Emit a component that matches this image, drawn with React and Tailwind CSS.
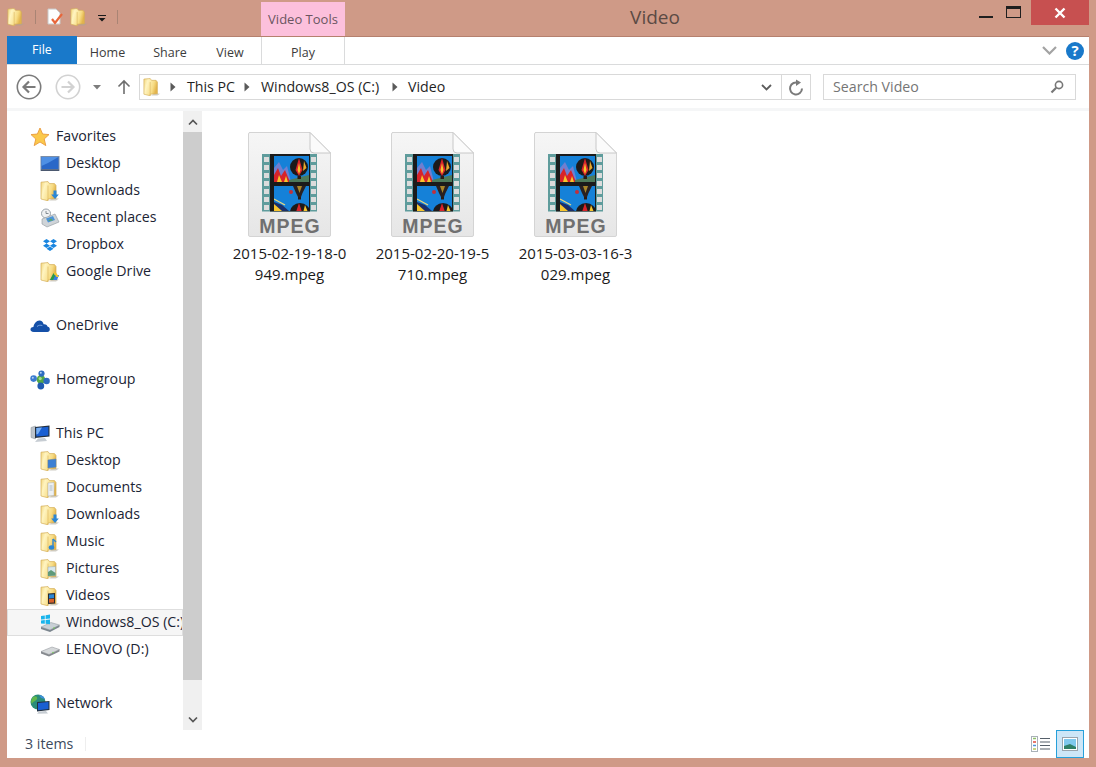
import { useId } from 'react'

function Folder({ children, size = 20 }) {
  const id = useId()
  return (
    <svg width={size} height={size} viewBox="0 0 20 20" className="shrink-0">
      <defs>
        <linearGradient id={id} x1="0" y1="0" x2="1" y2="0.35">
          <stop offset="0" stopColor="#f2d67e" />
          <stop offset="0.3" stopColor="#fff4c0" />
          <stop offset="0.75" stopColor="#f7dc85" />
          <stop offset="1" stopColor="#e3b54d" />
        </linearGradient>
      </defs>
      <path d="M13 17 L19 17.5 L16 19.5 L9 19.5 Z" fill="#a9a498" opacity="0.55" />
      <path d="M1 1.2 L8 0.6 L9.5 2.6 L14.5 2.6 L16 4.5 L16 17.5 L8 18 L8 19.8 L1 18 Z" fill={`url(#${id})`} stroke="#d3ac55" strokeWidth="0.7" />
      <path d="M8 4.5 V19.5" stroke="#dcb860" strokeWidth="0.7" />
      {children}
    </svg>
  )
}

function Star() {
  return (
    <svg width="20" height="20" viewBox="0 0 20 20" className="shrink-0">
      <path d="M10 1 L12.6 7 L19 7.6 L14.2 12 L15.8 18.6 L10 15 L4.2 18.6 L5.8 12 L1 7.6 L7.4 7 Z" fill="#fbc94b" stroke="#e99a3d" strokeWidth="0.9" />
    </svg>
  )
}

function DesktopIcon() {
  return (
    <svg width="20" height="20" viewBox="0 0 20 20" className="shrink-0">
      <rect x="0.5" y="2" width="19" height="15" fill="#7d8ea6" />
      <rect x="1.5" y="3" width="17" height="12" fill="#2a68c8" />
      <path d="M1.5 3 H18.5 L8 9 L1.5 12 Z" fill="#4f90e4" />
      <rect x="1" y="15.5" width="18" height="1.4" fill="#46536a" />
    </svg>
  )
}

function RecentIcon() {
  return (
    <svg width="20" height="20" viewBox="0 0 20 20" className="shrink-0">
      <circle cx="6" cy="5.5" r="4.5" fill="#eef0f2" stroke="#9aa3ab" />
      <path d="M6 3 V5.5 H8.5" stroke="#6a747c" fill="none" strokeWidth="0.8" />
      <path d="M2 11 L15 6 L19 14 L7 19 L2 16 Z" fill="#cfd4d8" stroke="#8f979e" strokeWidth="0.6" />
      <path d="M6 10.5 L13 8 L15 12 L8 14.5 Z" fill="#4d94d8" />
      <path d="M8 13 L11 10.5 L13 12.5 Z" fill="#63a65b" />
    </svg>
  )
}

function DropboxIcon() {
  return (
    <svg width="20" height="20" viewBox="0 0 20 20" className="shrink-0">
      <path d="M6.5 4 L10 6.2 L6.5 8.5 L3 6.2 Z M13.5 4 L17 6.2 L13.5 8.5 L10 6.2 Z M6.5 8.5 L10 10.8 L6.5 13 L3 10.8 Z M13.5 8.5 L17 10.8 L13.5 13 L10 10.8 Z M6.5 13.8 L10 11.6 L13.5 13.8 L10 16 Z" fill="#1a86e0" />
    </svg>
  )
}

function CloudIcon() {
  return (
    <svg width="20" height="20" viewBox="0 0 20 20" className="shrink-0">
      <path d="M3.8 16 C1.4 16 0.2 14.6 0.5 13 C0.8 11.6 2 10.8 3.4 10.9 C4 7.8 6.4 4.6 9.4 4.6 C11.6 4.6 13.2 6.2 13.6 8.2 C15.8 7.8 17.4 9.2 17.7 10.8 C19.2 11 20 12.4 19.8 13.8 C19.6 15.2 18.6 16 17.4 16 Z" fill="#1550a8" />
      <path d="M7 10.5 C8.6 9.2 10.4 8.9 12.4 9.6" stroke="#8fb6e8" strokeWidth="0.8" fill="none" />
    </svg>
  )
}

function HomegroupIcon() {
  return (
    <svg width="20" height="20" viewBox="0 0 20 20" className="shrink-0">
      <circle cx="11" cy="9.5" r="4.4" fill="#53a845" />
      <circle cx="11.5" cy="3.6" r="3.1" fill="#2d6cc0" />
      <circle cx="3.6" cy="8.6" r="3.3" fill="#3a7bd0" />
      <circle cx="16.6" cy="11" r="3.2" fill="#2d6cc0" />
      <circle cx="10.8" cy="16" r="3.4" fill="#1f5bb0" />
      <circle cx="10.2" cy="8.6" r="1.6" fill="#a9dd8d" />
      <circle cx="2.8" cy="7.8" r="1" fill="#b5d2f2" />
      <circle cx="10.8" cy="2.8" r="1" fill="#b5d2f2" />
    </svg>
  )
}

function PcIcon() {
  return (
    <svg width="20" height="20" viewBox="0 0 20 20" className="shrink-0">
      <path d="M1 3.5 L5.5 2 V15 L1 13.5 Z" fill="#bcc3ca" stroke="#8b939b" strokeWidth="0.5" />
      <path d="M5 3 L19.5 1.5 V12.5 L5 14 Z" fill="#23303f" />
      <path d="M6.3 4 L18.4 2.8 V11.4 L6.3 12.6 Z" fill="#1a5fd2" />
      <path d="M6.3 4 L12 3.4 L8 10 L6.3 10.6 Z" fill="#76aef2" />
      <path d="M8 14.5 L15 14 L17 17 L5 18 Z" fill="#c7cdd3" />
    </svg>
  )
}

function WindowsDrive() {
  return (
    <svg width="20" height="20" viewBox="0 0 20 20" className="shrink-0">
      <path d="M1 14 L11 9.5 L19.5 12 L10 17 Z" fill="#c9d0d6" stroke="#8a939b" strokeWidth="0.5" />
      <path d="M1 14 L10 17 L19.5 12 V14 L10 19 L1 16 Z" fill="#7c868f" />
      <circle cx="14" cy="15" r="0.8" fill="#6fd24c" />
      <path d="M1 3 L4.8 2.4 V6.2 L1 6.6 Z M5.6 2.3 L10 1.6 V5.6 L5.6 6.1 Z M1 7.4 L4.8 7 V10.8 L1 10.4 Z M5.6 6.9 L10 6.4 V11.2 L5.6 10.8 Z" fill="#19b4ec" />
    </svg>
  )
}

function GrayDrive() {
  return (
    <svg width="20" height="20" viewBox="0 0 20 20" className="shrink-0">
      <path d="M1 11.5 L12 7 L19.5 9.5 L9 14.5 Z" fill="#d5d8da" stroke="#8a8f94" strokeWidth="0.5" />
      <path d="M1 11.5 L9 14.5 L19.5 9.5 V11.5 L9 16.5 L1 13.5 Z" fill="#85898e" />
      <circle cx="13" cy="12.5" r="0.7" fill="#6fd24c" />
    </svg>
  )
}

function NetworkIcon() {
  return (
    <svg width="20" height="20" viewBox="0 0 20 20" className="shrink-0">
      <circle cx="8" cy="8" r="7.5" fill="#2a8c7a" />
      <path d="M3 3 C6 1 8 3 7 5 C6 7 3 7 2 10 C0.5 8 1 5 3 3 Z" fill="#62b84c" />
      <path d="M9 1 C12 1 14 3 15 5 L11 4 Z" fill="#3f8fd8" />
      <path d="M7 8 L19.5 7 V16 L7 17.5 Z" fill="#23303f" />
      <path d="M8 9 L18.5 8 V15 L8 16.2 Z" fill="#1a5fd2" />
      <path d="M9 17.5 L16 17 L18 19.5 L7 19.8 Z" fill="#c7cdd3" />
    </svg>
  )
}

const down = <path d="M13.5 9.5 H16.5 V13.5 H18.8 L15 18 L11.2 13.5 H13.5 Z" fill="#2a86d6" />

const favorites = [
  { label: 'Desktop', icon: <DesktopIcon /> },
  { label: 'Downloads', icon: <Folder>{down}</Folder> },
  { label: 'Recent places', icon: <RecentIcon /> },
  { label: 'Dropbox', icon: <DropboxIcon /> },
  {
    label: 'Google Drive',
    icon: (
      <Folder>
        <path d="M10 18 L13 13 H19 L17 18 Z" fill="#3b7de0" />
        <path d="M10 18 L13.5 11 L15 14 L13 18 Z" fill="#2a9a48" />
        <path d="M13.5 10.5 H16 L19 15 H16.5 Z" fill="#f3c52f" />
      </Folder>
    ),
  },
]

const pcItems = [
  { label: 'Desktop', icon: <Folder><path d="M8 9 L16 8 V16 L8 17 Z" fill="#3b7fd4" stroke="#5d7fa8" strokeWidth="0.6" /></Folder> },
  { label: 'Documents', icon: <Folder><path d="M8 5 L14 4.5 V17.5 L8 18 Z" fill="#eef1f3" stroke="#aab2b8" strokeWidth="0.5" /><path d="M9.5 8 H12.5 M9.5 10 H12.5 M9.5 12 H12.5" stroke="#8fa3b5" strokeWidth="0.7" /></Folder> },
  { label: 'Downloads', icon: <Folder>{down}</Folder> },
  { label: 'Music', icon: <Folder><path d="M13 7 V15" stroke="#2a86d6" strokeWidth="1.4" /><ellipse cx="11.5" cy="15.5" rx="2.8" ry="2.2" fill="#2a86d6" /><path d="M13 7 L16 10" stroke="#2a86d6" strokeWidth="1.2" /></Folder> },
  { label: 'Pictures', icon: <Folder><path d="M8 8 L15.5 7.5 V16.5 L8 17 Z" fill="#d5e6ee" stroke="#9aa8b0" strokeWidth="0.5" /><path d="M8 13 L11 11 L15.5 14 V16.5 L8 17 Z" fill="#5f9a7a" /></Folder> },
  { label: 'Videos', icon: <Folder><path d="M8 7.5 L15 7 V17.5 L8 18 Z" fill="#2c2c30" /><path d="M9 8.5 L14 8.2 V12 L9 12.4 Z" fill="#2a86d6" /><path d="M9 13 L14 12.7 V16.5 L9 16.8 Z" fill="#d8602a" /></Folder> },
  { label: 'Windows8_OS (C:)', icon: <WindowsDrive />, selected: true },
  { label: 'LENOVO (D:)', icon: <GrayDrive /> },
]

function NavRow({ label, icon, child, selected }) {
  return (
    <div
      className={`flex h-[27px] items-center gap-[6px] overflow-hidden whitespace-nowrap border ${
        selected ? 'bg-[#f6f6f6] border-[#dedede]' : 'border-transparent'
      } ${child ? 'pl-[32px]' : 'pl-[22px]'}`}
    >
      {icon}
      <span>{label}</span>
    </div>
  )
}

function Chevron({ up }) {
  return (
    <svg width="12" height="8" viewBox="0 0 12 8">
      <path d={up ? 'M2 6.5 L6 2.5 L10 6.5' : 'M2 1.5 L6 5.5 L10 1.5'} stroke="#555" strokeWidth="1.7" fill="none" />
    </svg>
  )
}

function Crumb() {
  return (
    <svg width="6" height="10" viewBox="0 0 6 10" className="shrink-0">
      <path d="M0.5 0.5 L5.5 5 L0.5 9.5 Z" fill="#5a5a5a" />
    </svg>
  )
}

function NavCircle({ dim }) {
  const c = dim ? '#d2d2d2' : '#7b7b7b'
  return (
    <svg width="26" height="26" viewBox="0 0 26 26" className="shrink-0">
      <circle cx="13" cy="13" r="11.7" fill="none" stroke={c} strokeWidth="1.6" />
      {dim ? (
        <path d="M6.5 13 H18 M13 7.5 L18.5 13 L13 18.5" stroke={c} strokeWidth="2.2" fill="none" />
      ) : (
        <path d="M19.5 13 H8 M13 7.5 L7.5 13 L13 18.5" stroke={c} strokeWidth="2.2" fill="none" />
      )}
    </svg>
  )
}

function MpegIcon() {
  const id = useId()
  const holes = [157, 165, 173, 181, 189, 197, 205]
  return (
    <svg width="84" height="108" viewBox="248 130 84 108">
      <defs>
        <clipPath id={id + 'a'}><rect x="274" y="156" width="35" height="26" /></clipPath>
        <clipPath id={id + 'b'}><rect x="274" y="186" width="35" height="25" /></clipPath>
        <linearGradient id={id + 'p'} x1="0" y1="0" x2="0" y2="1">
          <stop offset="0" stopColor="#f6f6f6" />
          <stop offset="1" stopColor="#e6e6e6" />
        </linearGradient>
      </defs>
      <path d="M249 132.5 H310 L330.5 153 V235 Q330.5 236.5 329 236.5 H250 Q248.5 236.5 248.5 235 V134 Q248.5 132.5 250 132.5 Z" fill={`url(#${id}p)`} stroke="#d4d4d4" />
      <path d="M310 132.5 L330.5 153 H314 Q310 153 310 149 Z" fill="#fbfbfb" stroke="#c8c8c8" />
      <rect x="262" y="154" width="55" height="57.5" fill="#5f9c9c" />
      <rect x="270" y="154" width="40" height="57.5" fill="#1b1b1b" />
      {holes.map((y) => (
        <g key={y}>
          <rect x="264" y={y} width="5" height="5" fill="#dcdcdc" />
          <rect x="311" y={y} width="5" height="5" fill="#dcdcdc" />
        </g>
      ))}
      <g clipPath={`url(#${id}a)`}>
        <rect x="274" y="156" width="35" height="26" fill="#1581d8" />
        <path d="M274 168 L279 162 L283 170 L287 166 L291 182 H274 Z" fill="#6f7fd0" />
        <path d="M274 175 L278 168 L281 176 L285 170 L290 182 H274 Z" fill="#d8232a" />
        <path d="M277 182 L279 175 L282 182 Z M284 182 L286 176 L288 182 Z" fill="#f7c52c" />
        <path d="M289 180 L309 175 V182 H289 Z" fill="#4d7a5a" />
        <circle cx="299" cy="167" r="9" fill="#1d1a1a" />
        <path d="M299 158 L302.5 170 L299 176 L295.5 170 Z" fill="#d8232a" />
        <path d="M299 163 L300.5 170 L299 174 L297.5 170 Z" fill="#f7c52c" />
        <path d="M304 161 L306.5 168 L303 171 Z" fill="#e8a82c" />
        <rect x="297.5" y="176" width="3.5" height="3" fill="#2b1a12" />
      </g>
      <g clipPath={`url(#${id}b)`}>
        <rect x="274" y="186" width="35" height="25" fill="#1581d8" />
        <path d="M274 202 L282 205 L289 211 H274 Z" fill="#1b2f6a" />
        <path d="M274 204 L282 211 H274 Z" fill="#f7c52c" />
        <path d="M274 199 L285 205" stroke="#e8d880" strokeWidth="1.2" />
        <circle cx="291" cy="192" r="2" fill="#c2303a" />
        <path d="M293 186 H306 L302.5 193 L301 197 H298 L296 193 Z" fill="#2a2020" />
        <path d="M297 186 L299.5 193 L302 186 Z" fill="#a8862a" />
        <rect x="298" y="197" width="3" height="2.5" fill="#2b1a12" />
        <ellipse cx="300" cy="212" rx="10" ry="9" fill="#1d1a1a" />
        <path d="M299 203 L302 212 H296 Z" fill="#d8232a" />
        <path d="M305 205 L307.5 211 H303.5 Z" fill="#f7c52c" />
      </g>
      <text x="290" y="232.5" textAnchor="middle" fontFamily="'Liberation Sans', sans-serif" fontWeight="700" fontSize="19.5" letterSpacing="1" fill="#707070">
        MPEG
      </text>
    </svg>
  )
}

const files = [
  ['2015-02-19-18-0', '949.mpeg'],
  ['2015-02-20-19-5', '710.mpeg'],
  ['2015-03-03-16-3', '029.mpeg'],
]

export default function App() {
  return (
    <div className="w-[1096px] h-[767px] flex flex-col overflow-hidden bg-[#cf9a87] font-['Open_Sans',sans-serif] text-[14.2px] leading-none text-[#1b2434]">
      {/* title bar */}
      <div className="flex h-9 shrink-0">
        <div className="flex w-[261px] items-start gap-[6px] pl-[7px] pt-[8px]">
          <Folder size={18} />
          <div className="h-[14px] w-px mt-[2px] bg-[#a98474] mx-[4px]" />
          <svg width="18" height="18" viewBox="0 0 18 18" className="shrink-0">
            <path d="M2 1 H10 L14 5 V16 H2 Z" fill="#fdfdfd" stroke="#c9c9c9" />
            <path d="M6 11 L9 15 L16 6" stroke="#e8663a" strokeWidth="2.2" fill="none" />
          </svg>
          <Folder size={18} />
          <svg width="12" height="18" viewBox="0 0 12 18" className="shrink-0 ml-[2px]">
            <path d="M2 7 H10 V8 H2 Z M2.5 10 H9.5 L6 13.5 Z" fill="#1a1a1a" />
          </svg>
          <div className="h-[14px] w-px mt-[2px] bg-[#a98474] ml-[3px]" />
        </div>
        <div className="w-[84px] mt-[2px] flex justify-center pt-[11px] bg-[#fcc0dc] text-[13px] text-[#6a5560]">Video Tools</div>
        <div className="flex-1 flex justify-center pt-[8px] text-[19px] text-[#5b4a44]">Video</div>
        <div className="w-[131px] flex">
          <div className="w-[41px] flex justify-center items-start pt-[16px]">
            <div className="w-[14px] h-[2px] bg-[#1f1f1f]" />
          </div>
          <div className="w-[25px] pt-[6px]">
            <div className="w-[15px] h-[12px] border border-[#1f1f1f] border-t-[3px]" />
          </div>
          <div className="w-[58px] h-[25px] flex items-center justify-center bg-[#c75050]">
            <svg width="12" height="12" viewBox="0 0 12 12">
              <path d="M1.5 1.5 L10.5 10.5 M10.5 1.5 L1.5 10.5" stroke="#fff" strokeWidth="2.4" />
            </svg>
          </div>
          <div className="w-[7px]" />
        </div>
      </div>

      {/* window */}
      <div className="flex-1 mx-[7px] mb-[9px] flex flex-col bg-white border-t border-[#b5806e] min-h-0">
        {/* ribbon tabs */}
        <div className="flex h-[28px] shrink-0 border-b border-[#dadbdc] text-[12.5px] text-[#3c3c3c]">
          <div className="w-[70px] -mt-px pt-px flex items-center justify-center bg-[#1979ca] text-white">File</div>
          <div className="w-[58px] pt-[10px] text-center pl-[3px]">Home</div>
          <div className="w-[70px] pt-[10px] text-center">Share</div>
          <div className="w-[50px] pt-[10px] text-center">View</div>
          <div className="w-[6px]" />
          <div className="w-[84px] pt-[10px] text-center border-x border-[#dadbdc]">Play</div>
          <div className="flex-1 flex justify-end items-center pr-[5px] gap-[9px]">
            <svg width="15" height="9" viewBox="0 0 15 9">
              <path d="M1 1 L7.5 7.5 L14 1" stroke="#a3a3a3" strokeWidth="2.2" fill="none" />
            </svg>
            <div className="w-[18px] h-[18px] rounded-full bg-[#1979ca] flex items-center justify-center text-white font-bold text-[15px]">?</div>
          </div>
        </div>

        {/* address row */}
        <div className="flex h-[46px] shrink-0 items-center pl-[9px] pr-[13px] pt-[1px] bg-white border-b-[3px] border-[#f5f6f7]">
          <NavCircle />
          <div className="w-[13px]" />
          <NavCircle dim />
          <svg width="8" height="5" viewBox="0 0 8 5" className="ml-[12px] shrink-0">
            <path d="M0 0 H8 L4 4.5 Z" fill="#7d7d7d" />
          </svg>
          <svg width="14" height="16" viewBox="0 0 14 16" className="ml-[16px] shrink-0">
            <path d="M7 15 V2 M1.5 7.5 L7 2 L12.5 7.5" stroke="#6e6e6e" strokeWidth="1.6" fill="none" />
          </svg>
          <div className="ml-[8px] w-[672px] h-[26px] flex items-center border border-[#d9d9d9] pl-[3px] text-[#1f1f1f]">
            <Folder size={18} />
            <div className="ml-[9px]"><Crumb /></div>
            <span className="ml-[11px] w-[47px] whitespace-nowrap">This PC</span>
            <div className="ml-[10px]"><Crumb /></div>
            <span className="ml-[11px] w-[120px] whitespace-nowrap">Windows8_OS (C:)</span>
            <div className="ml-[11px]"><Crumb /></div>
            <span className="ml-[10px]">Video</span>
            <div className="flex-1" />
            <div className="w-[30px] flex justify-center">
              <svg width="11" height="7" viewBox="0 0 11 7">
                <path d="M1 1 L5.5 5.5 L10 1" stroke="#5c5c5c" strokeWidth="1.8" fill="none" />
              </svg>
            </div>
            <div className="w-[29px] h-full border-l border-[#d9d9d9] flex items-center justify-center">
              <svg width="16" height="17" viewBox="0 0 16 17">
                <path d="M10.5 4 A6 6 0 1 0 14 9.5" stroke="#7a7a7a" strokeWidth="2" fill="none" />
                <path d="M8 0.5 L13 3.5 L8 7 Z" fill="#7a7a7a" />
              </svg>
            </div>
          </div>
          <div className="ml-[12px] flex-1 h-[26px] flex items-center justify-between border border-[#d9d9d9] pl-[9px] pr-[11px] text-[#757575]">
            <span>Search Video</span>
            <svg width="14" height="14" viewBox="0 0 14 14">
              <circle cx="9" cy="5" r="3.6" stroke="#777" strokeWidth="1.6" fill="none" />
              <path d="M6.2 7.8 L1.5 12.5" stroke="#777" strokeWidth="2.2" />
            </svg>
          </div>
        </div>

        {/* body */}
        <div className="flex flex-1 min-h-0">
          <div className="w-[176px] shrink-0 pt-[12px] overflow-hidden">
            <NavRow label="Favorites" icon={<Star />} />
            {favorites.map((f) => <NavRow key={f.label} {...f} child />)}
            <div className="h-[27px]" />
            <NavRow label="OneDrive" icon={<CloudIcon />} />
            <div className="h-[27px]" />
            <NavRow label="Homegroup" icon={<HomegroupIcon />} />
            <div className="h-[27px]" />
            <NavRow label="This PC" icon={<PcIcon />} />
            {pcItems.map((f) => <NavRow key={f.label} {...f} child />)}
            <div className="h-[27px]" />
            <NavRow label="Network" icon={<NetworkIcon />} />
          </div>
          <div className="w-[19px] shrink-0 flex flex-col bg-[#f0f0f0]">
            <div className="h-[21px] flex items-center justify-center"><Chevron up /></div>
            <div className="h-[548px] bg-[#cdcdcd]" />
            <div className="flex-1" />
            <div className="h-[21px] flex items-center justify-center"><Chevron /></div>
          </div>
          <div className="flex-1 flex items-start pl-[16px] pt-[19px] text-[15px] text-[#1a1a1a]">
            {files.map((lines) => (
              <div key={lines[0]} className="w-[143px] flex flex-col items-center">
                <MpegIcon />
                <div className="mt-[5px] leading-[21px] text-center whitespace-nowrap">
                  <div>{lines[0]}</div>
                  <div>{lines[1]}</div>
                </div>
              </div>
            ))}
          </div>
        </div>

        {/* status bar */}
        <div className="h-[28px] shrink-0 flex items-center pl-[18px] text-[#3d4a5c]">
          <span>3 items</span>
          <div className="ml-[12px] w-px h-[14px] bg-[#eeeeee]" />
          <div className="flex-1" />
          <svg width="20" height="16" viewBox="0 0 20 16" className="mr-[5px]">
            <rect x="0.5" y="0.5" width="6" height="15" fill="#fff" stroke="#a9b1b8" />
            <path d="M2 2.5 H5" stroke="#8fbf6a" strokeWidth="1.5" />
            <path d="M2 6 H5" stroke="#e04a3a" strokeWidth="1.5" />
            <path d="M2 9.5 H5" stroke="#4d94d8" strokeWidth="1.5" />
            <path d="M2 13 H5" stroke="#b4c85a" strokeWidth="1.5" />
            <path d="M9 2.5 H19 M9 6 H19 M9 9.5 H19 M9 13 H19" stroke="#56606a" strokeWidth="1.2" />
          </svg>
          <div className="w-[28px] h-full mr-[5px] flex items-center justify-center bg-[#cde6f7] border border-[#26a0da]">
            <svg width="16" height="14" viewBox="0 0 16 14">
              <rect x="0.5" y="0.5" width="15" height="13" fill="#fff" stroke="#9aa4ad" />
              <rect x="2" y="2" width="12" height="10" fill="#7fc8ee" />
              <path d="M2 9 L8 7 L14 10 V12 H2 Z" fill="#2f7f68" />
            </svg>
          </div>
        </div>
      </div>
    </div>
  )
}
